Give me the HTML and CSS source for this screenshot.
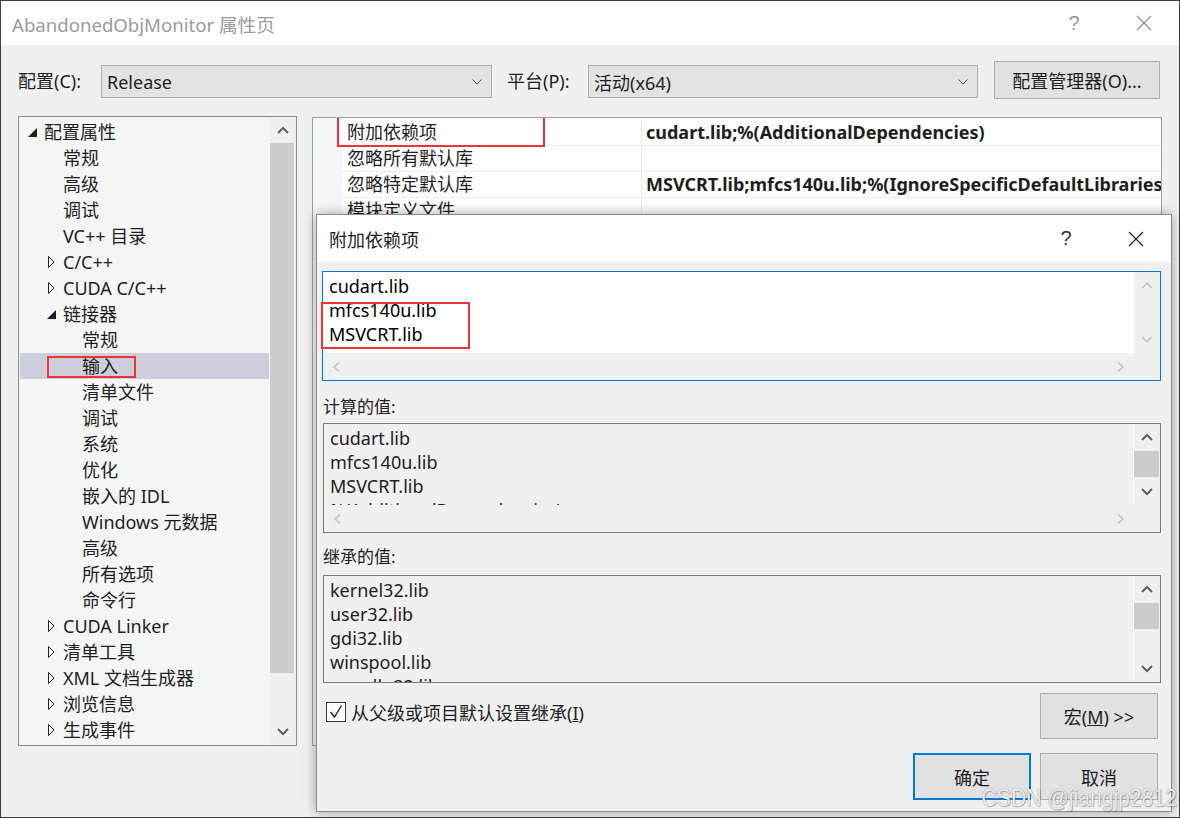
FILE: index.html
```html
<!DOCTYPE html>
<html lang="zh-CN">
<head>
    <meta charset="UTF-8">
    <meta name="viewport" content="width=device-width, initial-scale=1.0">
    <title>AbandonedObjMonitor 属性页</title>
    <link rel="stylesheet" href="styles.css">
</head>
<body>
    <div class="window">
        <div class="titlebar">
            <span class="title">AbandonedObjMonitor 属性页</span>
            <span class="caption-btn help">?</span>
            <span class="caption-btn">
                <svg width="16" height="16" viewBox="0 0 16 16"><path d="M1 1 L15 15 M15 1 L1 15" stroke="#8a8a8a" stroke-width="1.1" fill="none"/></svg>
            </span>
        </div>

        <div class="config-row">
            <span class="config-label">配置(C):</span>
            <div class="combo">
                <span class="combo-text">Release</span>
                <svg class="combo-arrow" width="10" height="6" viewBox="0 0 10 6"><path d="M0.5 0.5 L5 5 L9.5 0.5" stroke="#404040" stroke-width="1" fill="none"/></svg>
            </div>
            <span class="config-label platform">平台(P):</span>
            <div class="combo">
                <span class="combo-text">活动(x64)</span>
                <svg class="combo-arrow" width="10" height="6" viewBox="0 0 10 6"><path d="M0.5 0.5 L5 5 L9.5 0.5" stroke="#404040" stroke-width="1" fill="none"/></svg>
            </div>
            <button type="button" class="btn manager-btn">配置管理器(O)...</button>
        </div>

        <div class="main">
            <div class="tree">
                <ul class="tree-list">
                    <li class="tree-row lv0"><span class="expander"><svg width="16" height="16" viewBox="0 0 16 16"><polygon points="9,4 9,13 0,13" fill="#1e1e1e"/></svg></span>配置属性</li>
                    <li class="tree-row lv1"><span class="expander"></span>常规</li>
                    <li class="tree-row lv1"><span class="expander"></span>高级</li>
                    <li class="tree-row lv1"><span class="expander"></span>调试</li>
                    <li class="tree-row lv1"><span class="expander"></span>VC++ 目录</li>
                    <li class="tree-row lv1"><span class="expander"><svg width="16" height="16" viewBox="0 0 16 16"><polygon points="1.5,2.5 7,8 1.5,13.5" fill="none" stroke="#1e1e1e" stroke-width="1"/></svg></span>C/C++</li>
                    <li class="tree-row lv1"><span class="expander"><svg width="16" height="16" viewBox="0 0 16 16"><polygon points="1.5,2.5 7,8 1.5,13.5" fill="none" stroke="#1e1e1e" stroke-width="1"/></svg></span>CUDA C/C++</li>
                    <li class="tree-row lv1"><span class="expander"><svg width="16" height="16" viewBox="0 0 16 16"><polygon points="9,4 9,13 0,13" fill="#1e1e1e"/></svg></span>链接器</li>
                    <li class="tree-row lv2"><span class="expander"></span>常规</li>
                    <li class="tree-row lv2 selected marked"><span class="expander"></span>输入</li>
                    <li class="tree-row lv2"><span class="expander"></span>清单文件</li>
                    <li class="tree-row lv2"><span class="expander"></span>调试</li>
                    <li class="tree-row lv2"><span class="expander"></span>系统</li>
                    <li class="tree-row lv2"><span class="expander"></span>优化</li>
                    <li class="tree-row lv2"><span class="expander"></span>嵌入的 IDL</li>
                    <li class="tree-row lv2"><span class="expander"></span>Windows 元数据</li>
                    <li class="tree-row lv2"><span class="expander"></span>高级</li>
                    <li class="tree-row lv2"><span class="expander"></span>所有选项</li>
                    <li class="tree-row lv2"><span class="expander"></span>命令行</li>
                    <li class="tree-row lv1"><span class="expander"><svg width="16" height="16" viewBox="0 0 16 16"><polygon points="1.5,2.5 7,8 1.5,13.5" fill="none" stroke="#1e1e1e" stroke-width="1"/></svg></span>CUDA Linker</li>
                    <li class="tree-row lv1"><span class="expander"><svg width="16" height="16" viewBox="0 0 16 16"><polygon points="1.5,2.5 7,8 1.5,13.5" fill="none" stroke="#1e1e1e" stroke-width="1"/></svg></span>清单工具</li>
                    <li class="tree-row lv1"><span class="expander"><svg width="16" height="16" viewBox="0 0 16 16"><polygon points="1.5,2.5 7,8 1.5,13.5" fill="none" stroke="#1e1e1e" stroke-width="1"/></svg></span>XML 文档生成器</li>
                    <li class="tree-row lv1"><span class="expander"><svg width="16" height="16" viewBox="0 0 16 16"><polygon points="1.5,2.5 7,8 1.5,13.5" fill="none" stroke="#1e1e1e" stroke-width="1"/></svg></span>浏览信息</li>
                    <li class="tree-row lv1"><span class="expander"><svg width="16" height="16" viewBox="0 0 16 16"><polygon points="1.5,2.5 7,8 1.5,13.5" fill="none" stroke="#1e1e1e" stroke-width="1"/></svg></span>生成事件</li>
                </ul>
                <div class="vscroll tree-scroll">
                    <div class="sb-btn"><svg width="12" height="8" viewBox="0 0 12 8"><path d="M1 7 L6 2 L11 7" stroke="#606060" stroke-width="2" fill="none"/></svg></div>
                    <div class="sb-thumb tree-thumb"></div>
                    <div class="sb-space"></div>
                    <div class="sb-btn"><svg width="12" height="8" viewBox="0 0 12 8"><path d="M1 1 L6 6 L11 1" stroke="#606060" stroke-width="2" fill="none"/></svg></div>
                </div>
            </div>

            <div class="grid">
                <div class="grid-row marked">
                    <span class="grid-name">附加依赖项</span>
                    <span class="grid-value">cudart.lib;%(AdditionalDependencies)</span>
                </div>
                <div class="grid-row">
                    <span class="grid-name">忽略所有默认库</span>
                    <span class="grid-value"></span>
                </div>
                <div class="grid-row">
                    <span class="grid-name">忽略特定默认库</span>
                    <span class="grid-value">MSVCRT.lib;mfcs140u.lib;%(IgnoreSpecificDefaultLibraries)</span>
                </div>
                <div class="grid-row">
                    <span class="grid-name">模块定义文件</span>
                    <span class="grid-value"></span>
                </div>
            </div>
        </div>

        <div class="dialog">
            <div class="dialog-titlebar">
                <span class="dialog-title">附加依赖项</span>
                <span class="caption-btn help dark">?</span>
                <span class="caption-btn">
                    <svg width="16" height="16" viewBox="0 0 16 16"><path d="M1 1 L15 15 M15 1 L1 15" stroke="#1e1e1e" stroke-width="1.1" fill="none"/></svg>
                </span>
            </div>

            <div class="dialog-body">
                <div class="listbox edit-box">
                    <div class="list-text">
                        <div>cudart.lib</div>
                        <div>mfcs140u.lib</div>
                        <div>MSVCRT.lib</div>
                    </div>
                    <div class="vscroll">
                        <div class="sb-btn"><svg width="12" height="8" viewBox="0 0 12 8"><path d="M1.5 7 L6 2 L10.5 7" stroke="#c2c2c2" stroke-width="1.5" fill="none"/></svg></div>
                        <div class="sb-space"></div>
                        <div class="sb-btn"><svg width="12" height="8" viewBox="0 0 12 8"><path d="M1.5 1 L6 6 L10.5 1" stroke="#c2c2c2" stroke-width="1.5" fill="none"/></svg></div>
                    </div>
                    <div class="hscroll">
                        <div class="sb-btn"><svg width="8" height="12" viewBox="0 0 8 12"><path d="M7 1.5 L2 6 L7 10.5" stroke="#c2c2c2" stroke-width="1.5" fill="none"/></svg></div>
                        <div class="sb-space"></div>
                        <div class="sb-btn"><svg width="8" height="12" viewBox="0 0 8 12"><path d="M1 1.5 L6 6 L1 10.5" stroke="#c2c2c2" stroke-width="1.5" fill="none"/></svg></div>
                    </div>
                    <div class="sb-corner"></div>
                </div>

                <div class="field-label first">计算的值:</div>
                <div class="listbox readonly">
                    <div class="list-text">
                        <div>cudart.lib</div>
                        <div>mfcs140u.lib</div>
                        <div>MSVCRT.lib</div>
                        <div>%(AdditionalDependencies)</div>
                    </div>
                    <div class="vscroll">
                        <div class="sb-btn"><svg width="12" height="8" viewBox="0 0 12 8"><path d="M1 7 L6 2 L11 7" stroke="#606060" stroke-width="2" fill="none"/></svg></div>
                        <div class="sb-thumb small"></div>
                        <div class="sb-space"></div>
                        <div class="sb-btn"><svg width="12" height="8" viewBox="0 0 12 8"><path d="M1 1 L6 6 L11 1" stroke="#606060" stroke-width="2" fill="none"/></svg></div>
                    </div>
                    <div class="hscroll">
                        <div class="sb-btn"><svg width="8" height="12" viewBox="0 0 8 12"><path d="M7 1.5 L2 6 L7 10.5" stroke="#c2c2c2" stroke-width="1.5" fill="none"/></svg></div>
                        <div class="sb-space"></div>
                        <div class="sb-btn"><svg width="8" height="12" viewBox="0 0 8 12"><path d="M1 1.5 L6 6 L1 10.5" stroke="#c2c2c2" stroke-width="1.5" fill="none"/></svg></div>
                    </div>
                    <div class="sb-corner"></div>
                </div>

                <div class="field-label">继承的值:</div>
                <div class="listbox readonly inherited">
                    <div class="list-text">
                        <div>kernel32.lib</div>
                        <div>user32.lib</div>
                        <div>gdi32.lib</div>
                        <div>winspool.lib</div>
                        <div>comdlg32.lib</div>
                    </div>
                    <div class="vscroll">
                        <div class="sb-btn"><svg width="12" height="8" viewBox="0 0 12 8"><path d="M1 7 L6 2 L11 7" stroke="#606060" stroke-width="2" fill="none"/></svg></div>
                        <div class="sb-thumb small"></div>
                        <div class="sb-space"></div>
                        <div class="sb-btn"><svg width="12" height="8" viewBox="0 0 12 8"><path d="M1 1 L6 6 L11 1" stroke="#606060" stroke-width="2" fill="none"/></svg></div>
                    </div>
                </div>

                <div class="option-row">
                    <label class="check">
                        <span class="check-box"><svg width="18" height="18" viewBox="0 0 18 18"><path d="M3.5 9 L7.5 14 L14.5 2.5" stroke="#1e1e1e" stroke-width="1.4" fill="none"/></svg></span>
                        <span>从父级或项目默认设置继承(<u>I</u>)</span>
                    </label>
                    <button type="button" class="btn dlg-btn macro-btn">宏(<u>M</u>) &gt;&gt;</button>
                </div>

                <div class="button-row">
                    <button type="button" class="btn dlg-btn default">确定</button>
                    <button type="button" class="btn dlg-btn">取消</button>
                </div>
            </div>
        </div>

        <div class="watermark">CSDN @jiangjp2812</div>
    </div>
</body>
</html>
```

FILE: styles.css
```css
body {
  margin: 0;
  width: 1180px;
  height: 818px;
  overflow: hidden;
  font-family: "Noto Sans", "Noto Sans CJK SC", sans-serif;
  font-size: 18px;
  color: #1e1e1e;
}

.window {
  position: relative;
  box-sizing: border-box;
  width: 1180px;
  height: 818px;
  border: 1px solid #3f3f3f;
  background-color: #f0f0f0;
}

/* title bars */

.titlebar {
  display: flex;
  align-items: center;
  height: 44px;
  padding-left: 11px;
  background-color: #fff;
}

.title {
  flex: 1;
  color: #9b9b9b;
  font-size: 18.6px;
}

.caption-btn {
  display: flex;
  align-items: center;
  justify-content: center;
  width: 70px;
  height: 100%;
}

.help {
  font-family: "Liberation Sans", sans-serif;
  font-size: 20px;
  color: #9a9a9a;
}

.help.dark {
  color: #333;
}

/* configuration row */

.config-row {
  display: flex;
  align-items: flex-start;
  margin-top: 16px;
  padding-left: 17px;
}

.config-label {
  width: 83px;
  margin-top: 4px;
  line-height: 33px;
}

.config-label.platform {
  width: 81px;
  margin-left: 15px;
}

.combo {
  display: flex;
  align-items: center;
  box-sizing: border-box;
  width: 391px;
  height: 33px;
  margin-top: 4px;
  padding: 0 9px 0 5px;
  border: 1px solid #adadad;
  background-color: #e3e3e3;
}

.combo + .config-label + .combo {
  width: 390px;
}

.combo-text {
  flex: 1;
}

.btn {
  box-sizing: border-box;
  padding: 0;
  border: 1px solid #adadad;
  background-color: #e1e1e1;
  font-family: "Noto Sans", "Noto Sans CJK SC", sans-serif;
  font-size: 18px;
  color: #1e1e1e;
}

.manager-btn {
  width: 166px;
  height: 38px;
  margin-left: 16px;
}

/* main area */

.main {
  display: flex;
  align-items: flex-start;
  margin-top: 17px;
  padding-left: 17px;
}

.tree {
  display: flex;
  box-sizing: border-box;
  width: 279px;
  height: 630px;
  border: 1px solid #8a8a8a;
  background-color: #f5f5f5;
}

.tree-list {
  flex: 1;
  margin: 0;
  padding: 2px 0 0 0;
  list-style: none;
  overflow: hidden;
}

.tree-row {
  position: relative;
  display: flex;
  align-items: center;
  height: 26px;
  margin: 0 1px;
  line-height: 26px;
  white-space: nowrap;
}

.tree-row.lv0 { padding-left: 8px; }
.tree-row.lv1 { padding-left: 27px; }
.tree-row.lv2 { padding-left: 46px; }

.expander {
  display: flex;
  width: 16px;
  height: 16px;
  flex: none;
}

.tree-row.selected {
  background-color: #cccedb;
}

.tree-row.marked::after {
  content: "";
  position: absolute;
  left: 27px;
  top: 3px;
  width: 89px;
  height: 22px;
  box-sizing: border-box;
  border: 2px solid #ee3338;
}

/* scrollbars */

.vscroll {
  display: flex;
  flex-direction: column;
  width: 26px;
  background-color: #f0f0f0;
}

.hscroll {
  display: flex;
  height: 27px;
  background-color: #f0f0f0;
}

.sb-btn {
  display: flex;
  align-items: center;
  justify-content: center;
  width: 26px;
  height: 26px;
  flex: none;
}

.hscroll .sb-btn {
  height: 27px;
}

.sb-space {
  flex: 1;
}

.sb-thumb {
  flex: none;
  margin: 0 2px 0 0;
  background-color: #cdcdcd;
}

.tree-thumb {
  height: 530px;
}

.sb-thumb.small {
  height: 26px;
  margin: 1px 1px 0 0;
}

.sb-corner {
  background-color: #f0f0f0;
}

/* property grid */

.grid {
  box-sizing: border-box;
  width: 850px;
  height: 629px;
  margin-top: 1px;
  margin-left: 15px;
  padding-top: 2px;
  border: 1px solid #a0a0a0;
  background: linear-gradient(to right, #f4f6f9 29px, #fff 29px);
  overflow: hidden;
}

.grid-row {
  position: relative;
  display: flex;
  height: 26px;
  margin-left: 29px;
  line-height: 25px;
  white-space: nowrap;
}

.grid-name {
  box-sizing: border-box;
  width: 300px;
  flex: none;
  padding-left: 5px;
  border-right: 1px solid #ececec;
  border-bottom: 1px solid #ececec;
}

.grid-value {
  flex: 1;
  padding-left: 4px;
  border-bottom: 1px solid #ececec;
  font-weight: 700;
  overflow: hidden;
}

.grid-row.marked::after {
  content: "";
  position: absolute;
  left: -5px;
  top: -7px;
  width: 208px;
  height: 34px;
  box-sizing: border-box;
  border: 2px solid #ee3338;
}

/* dialog */

.dialog {
  position: absolute;
  left: 315px;
  top: 213px;
  display: flex;
  flex-direction: column;
  box-sizing: border-box;
  width: 856px;
  height: 598px;
  border: 1px solid #8c8c8c;
  background-color: #f0f0f0;
  box-shadow: 0 0 12px rgba(0, 0, 0, 0.35);
}

.dialog-titlebar {
  display: flex;
  align-items: center;
  height: 47px;
  padding-left: 12px;
  background-color: #fff;
}

.dialog-title {
  flex: 1;
}

.dialog-body {
  padding: 9px 10px 0 6px;
}

.listbox {
  position: relative;
  display: grid;
  grid-template-columns: 1fr 26px;
  grid-template-rows: 81px 27px;
  box-sizing: border-box;
  height: 110px;
  border: 1px solid #7a7a7a;
}

.edit-box {
  margin-left: -1px;
  border-color: #0078d7;
}

.edit-box .list-text {
  background-color: #fff;
  color: #000;
}

.listbox.inherited {
  grid-template-rows: 106px;
  height: 108px;
}

.list-text {
  padding: 2px 6px 0 6px;
  line-height: 24px;
  overflow: hidden;
  white-space: nowrap;
}

.readonly .list-text {
  border-right: 1px solid #fff;
}

.edit-box::after {
  content: "";
  position: absolute;
  left: -2px;
  top: 30px;
  width: 149px;
  height: 47px;
  box-sizing: border-box;
  border: 2px solid #ee3338;
}

.field-label {
  margin-top: 12px;
  margin-bottom: 6px;
  line-height: 24px;
  font-size: 17px;
}

.field-label.first {
  margin-top: 14px;
  margin-bottom: 4px;
}

.option-row {
  display: flex;
  justify-content: space-between;
  align-items: flex-start;
  margin-top: 10px;
  padding-right: 3px;
}

.check {
  display: flex;
  align-items: center;
  margin-top: 6px;
  margin-left: 3px;
  gap: 5px;
}

.check-box {
  display: flex;
  align-items: center;
  justify-content: center;
  box-sizing: border-box;
  width: 20px;
  height: 20px;
  border: 1px solid #333;
  background-color: #fff;
}

.dlg-btn {
  width: 118px;
  height: 46px;
}

.button-row {
  display: flex;
  justify-content: flex-end;
  gap: 9px;
  margin-top: 14px;
  padding-right: 3px;
}

.button-row .dlg-btn {
  height: 47px;
}

.dlg-btn.default {
  border: 2px solid #0078d7;
}

/* overlay */

.watermark {
  position: absolute;
  right: 2px;
  bottom: 5px;
  font-family: "Liberation Sans", sans-serif;
  font-size: 24px;
  color: rgba(255, 255, 255, 0.85);
  text-shadow: 0 0 1px #7a7a7a, 1px 1px 1px rgba(0, 0, 0, 0.25);
  transform: scaleX(0.88);
  transform-origin: right bottom;
}
```
